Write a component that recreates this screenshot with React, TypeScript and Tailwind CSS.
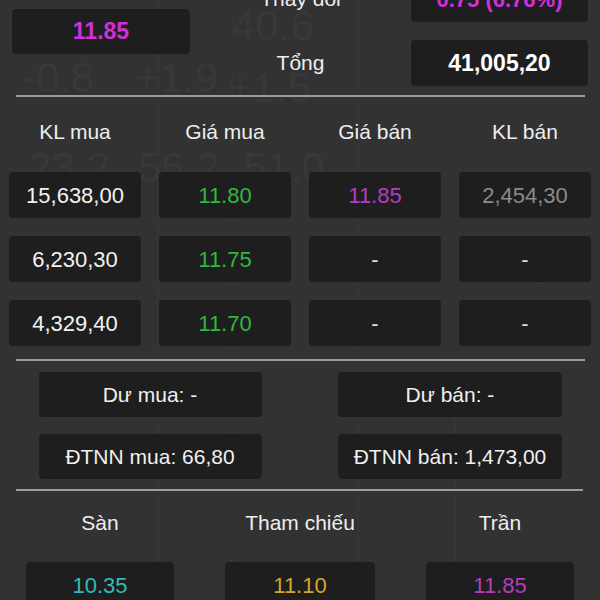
import React from "react";

const Box = ({ children, className = "" }: { children: React.ReactNode; className?: string }) => (
  <div className={`flex items-center justify-center rounded-[4px] bg-[#1e1e1e] ${className}`}>{children}</div>
);

function ChartBackdrop() {
  return (
    <svg className="pointer-events-none absolute inset-0" width="600" height="600" viewBox="0 0 600 600" aria-hidden="true">
      <g fill="#383838" fontFamily="Liberation Sans Narrow, Liberation Sans, sans-serif" fontSize="42">
        <text x="22" y="92">-0.8</text>
        <text x="135" y="92">+1.9</text>
        <text x="228" y="102">+1.5</text>
        <text x="232" y="40">40.6</text>
        <text x="28" y="182">23.2</text>
        <text x="138" y="182">56.2</text>
        <text x="243" y="182">51.0</text>
      </g>
      <g stroke="#383838" strokeWidth="1">
        <line x1="158" y1="0" x2="158" y2="600" />
        <line x1="232" y1="0" x2="232" y2="600" />
        <line x1="358" y1="0" x2="358" y2="600" />
        <line x1="455" y1="380" x2="455" y2="600" />
        <line x1="520" y1="300" x2="600" y2="220" />
      </g>
    </svg>
  );
}

export default function App() {
  const rows = [
    ["15,638,00", "11.80", "11.85", "2,454,30"],
    ["6,230,30", "11.75", "-", "-"],
    ["4,329,40", "11.70", "-", "-"],
  ];
  const colColor = ["text-[#f2f2f2]", "text-[#2fb83c]", "text-[#b43cc4]", "text-[#8a8a8a]"];
  return (
    <div className="relative h-[600px] w-[600px] overflow-hidden bg-[#323232] font-['Liberation_Sans',Arial,sans-serif]">
      <ChartBackdrop />

      <div className="relative flex flex-col">
        {/* top summary */}
        <div className="-mt-[24px] grid grid-cols-[178px_1fr_177px] px-[12px]">
          <div className="flex items-center">
            <Box className="h-[45px] w-full">
              <span className="text-[23px] font-bold text-[#d030dc]">11.85</span>
            </Box>
          </div>
          <div className="flex flex-col gap-[18px]">
            <div className="flex h-[46px] items-center justify-center text-[21px] text-[#eeeeee]">Thay đổi</div>
            <div className="flex h-[46px] items-center justify-center text-[21px] text-[#eeeeee]">Tổng</div>
          </div>
          <div className="flex flex-col gap-[18px]">
            <Box className="h-[46px]">
              <span className="text-[22px] font-bold text-[#d030dc]">0.75 (6.76%)</span>
            </Box>
            <Box className="h-[46px]">
              <span className="text-[23px] font-bold text-white">41,005,20</span>
            </Box>
          </div>
        </div>

        <div className="ml-[16px] mr-[15px] mt-[9px] h-[2px] bg-[#9c9c9c]" />

        {/* order book */}
        <div className="grid h-[70px] grid-cols-4 items-center gap-x-[18px] px-[9px] text-[21px] text-[#eeeeee]">
          <div className="text-center">KL mua</div>
          <div className="text-center">Giá mua</div>
          <div className="text-center">Giá bán</div>
          <div className="text-center">KL bán</div>
        </div>
        <div className="mt-[5px] grid grid-cols-4 gap-x-[18px] gap-y-[18px] px-[9px]">
          {rows.map((r, i) =>
            r.map((v, j) => (
              <Box key={`${i}-${j}`} className="h-[46px]">
                <span className={`text-[22px] ${v === "-" ? "text-[#dddddd]" : colColor[j]}`}>{v}</span>
              </Box>
            ))
          )}
        </div>

        <div className="ml-[16px] mr-[15px] mt-[13px] h-[2px] bg-[#9c9c9c]" />

        {/* surplus / foreign */}
        <div className="mt-[11px] grid grid-cols-2 gap-y-[17px] text-[21px] text-[#f0f0f0]">
          <div className="flex justify-center">
            <Box className="h-[45px] w-[223px]">Dư mua: -</Box>
          </div>
          <div className="flex justify-center">
            <Box className="h-[45px] w-[224px]">Dư bán: -</Box>
          </div>
          <div className="flex justify-center">
            <Box className="h-[45px] w-[223px]">ĐTNN mua: 66,80</Box>
          </div>
          <div className="flex justify-center">
            <Box className="h-[45px] w-[224px]">ĐTNN bán: 1,473,00</Box>
          </div>
        </div>

        <div className="ml-[16px] mr-[17px] mt-[10px] h-[2px] bg-[#9c9c9c]" />

        {/* price limits */}
        <div className="grid h-[64px] grid-cols-3 items-center text-[21px] text-[#eeeeee]">
          <div className="text-center">Sàn</div>
          <div className="text-center">Tham chiếu</div>
          <div className="text-center">Trần</div>
        </div>
        <div className="mt-[7px] grid grid-cols-3">
          <div className="flex justify-center">
            <Box className="h-[46px] w-[148px]">
              <span className="text-[22px] text-[#2ebcbc]">10.35</span>
            </Box>
          </div>
          <div className="flex justify-center">
            <Box className="h-[46px] w-[150px]">
              <span className="text-[22px] text-[#d4a62a]">11.10</span>
            </Box>
          </div>
          <div className="flex justify-center">
            <Box className="h-[46px] w-[148px]">
              <span className="text-[22px] text-[#b43cc4]">11.85</span>
            </Box>
          </div>
        </div>
      </div>
    </div>
  );
}
